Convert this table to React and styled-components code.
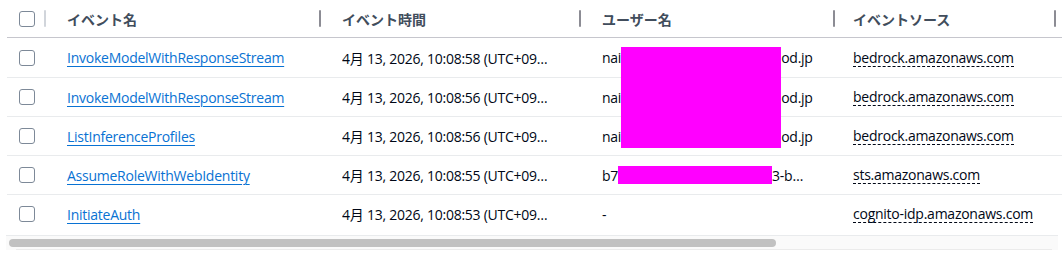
import React from "react";
import styled, { createGlobalStyle } from "styled-components";

const GlobalStyle = createGlobalStyle`
  body {
    margin: 0;
    background: #ffffff;
    font-family: "Open Sans", "Noto Sans CJK JP", sans-serif;
    -webkit-font-smoothing: antialiased;
  }
`;

const COLUMNS = "39px 275px 260px 254px 221px 240px";

const Page = styled.div`
  width: 1062px;
  height: 259px;
  overflow: hidden;
  padding-left: 7px;
  box-sizing: border-box;
`;

const Table = styled.div`
  display: flex;
  flex-direction: column;
  width: max-content;
`;

const HeaderRow = styled.div`
  display: grid;
  grid-template-columns: ${COLUMNS};
  height: 37px;
  border-bottom: 1px solid #c6c6cd;
`;

const Row = styled.div`
  display: grid;
  grid-template-columns: ${COLUMNS};
  height: 38px;
  border-bottom: 1px solid ${({ $last }) => ($last ? "transparent" : "#e9ebed")};
  &:nth-child(2) {
    height: 39px;
  }
`;

const HeaderCell = styled.div`
  display: flex;
  align-items: center;
  justify-content: space-between;
  padding-left: ${({ $pad }) => $pad}px;
  font-size: 14px;
  font-weight: 700;
  color: #414d5c;
  white-space: nowrap;
`;

const Resizer = styled.span`
  flex: none;
  width: 2px;
  height: 17px;
  border-radius: 1px;
  background: ${({ $light }) => ($light ? "#d1d5db" : "#8c8c94")};
`;

const Cell = styled.div`
  display: flex;
  align-items: center;
  min-width: 0;
  padding-left: ${({ $pad }) => $pad}px;
  padding-right: ${({ $right = 20 }) => $right}px;
  font-size: 14px;
  letter-spacing: -0.25px;
  color: #000716;
  white-space: nowrap;
`;

const Checkbox = styled.span`
  display: block;
  flex: none;
  width: 14px;
  height: 14px;
  border: 1px solid #7d8998;
  border-radius: 3px;
  background: #fff;
`;

const EventLink = styled.a`
  color: #0972d3;
  text-decoration: underline;
  text-decoration-thickness: 1px;
  text-underline-offset: 3px;
  cursor: pointer;
`;

const Truncate = styled.span`
  display: block;
  overflow: hidden;
  text-overflow: ellipsis;
  min-width: 0;
`;

const UserName = styled.span`
  display: flex;
  align-items: center;
`;

const Hidden = styled.span`
  position: relative;
  display: inline-block;
  flex: none;
  width: ${({ $w }) => $w}px;
  height: 18px;
  background: ${({ $fill }) => ($fill ? "#ff00ff" : "transparent")};
`;

const Mask = styled.span`
  position: absolute;
  z-index: 1;
  left: 0;
  top: -2px;
  width: 100%;
  height: ${({ $h }) => $h}px;
  background: #ff00ff;
`;

const Source = styled.span`
  line-height: 17px;
  border-bottom: 1px dashed #000716;
`;

const ScrollTrack = styled.div`
  margin-top: 1px;
  margin-left: -1px;
  width: 1052px;
  height: 14px;
  border-top: 1px solid #e9ebed;
  background: #fafafa;
  display: flex;
  flex-direction: column;
`;

const ScrollThumb = styled.div`
  margin-top: 3px;
  margin-left: 3px;
  width: 767px;
  height: 8px;
  border-radius: 4px;
  background: #c1c1c1;
`;

const TrackEdge = styled.div`
  margin-top: auto;
  margin-left: 10px;
  width: 1036px;
  height: 1px;
  background: #ebebeb;
`;

const headers = [
  { label: "イベント名", pad: 21 },
  { label: "イベント時間", pad: 21 },
  { label: "ユーザー名", pad: 21 },
  { label: "イベントソース", pad: 18 },
];

const rows = [
  {
    name: "InvokeModelWithResponseStream",
    time: "4月 13, 2026, 10:08:58 (UTC+09…",
    user: { head: "nai", gap: 160, tail: "od.jp", mask: 101 },
    source: "bedrock.amazonaws.com",
  },
  {
    name: "InvokeModelWithResponseStream",
    time: "4月 13, 2026, 10:08:56 (UTC+09…",
    user: { head: "nai", gap: 160, tail: "od.jp" },
    source: "bedrock.amazonaws.com",
  },
  {
    name: "ListInferenceProfiles",
    time: "4月 13, 2026, 10:08:56 (UTC+09…",
    user: { head: "nai", gap: 160, tail: "od.jp" },
    source: "bedrock.amazonaws.com",
  },
  {
    name: "AssumeRoleWithWebIdentity",
    time: "4月 13, 2026, 10:08:55 (UTC+09…",
    user: { head: "b7", gap: 154, tail: "3-b…", fill: true },
    source: "sts.amazonaws.com",
  },
  {
    name: "InitiateAuth",
    time: "4月 13, 2026, 10:08:53 (UTC+09…",
    user: null,
    source: "cognito-idp.amazonaws.com",
  },
];

function User({ user }) {
  if (!user) return <span>-</span>;
  return (
    <UserName>
      {user.head}
      <Hidden $w={user.gap} $fill={user.fill}>
        {user.mask && <Mask $h={user.mask} />}
      </Hidden>
      {user.tail}
    </UserName>
  );
}

export default function App() {
  return (
    <>
      <GlobalStyle />
      <Page>
        <Table>
          <HeaderRow>
            <HeaderCell $pad={12}>
              <Checkbox />
              <Resizer $light />
            </HeaderCell>
            {headers.map((h) => (
              <HeaderCell key={h.label} $pad={h.pad}>
                {h.label}
                <Resizer />
              </HeaderCell>
            ))}
            <HeaderCell $pad={21} />
          </HeaderRow>

          {rows.map((r, i) => (
            <Row key={i} $last={i === rows.length - 1}>
              <Cell $pad={12} $right={0}>
                <Checkbox />
              </Cell>
              <Cell $pad={21}>
                <EventLink>{r.name}</EventLink>
              </Cell>
              <Cell $pad={21} $right={18}>
                <Truncate>{r.time}</Truncate>
              </Cell>
              <Cell $pad={21}>
                <User user={r.user} />
              </Cell>
              <Cell $pad={18}>
                <Source>{r.source}</Source>
              </Cell>
              <Cell $pad={21} />
            </Row>
          ))}
        </Table>
        <ScrollTrack>
          <ScrollThumb />
          <TrackEdge />
        </ScrollTrack>
      </Page>
    </>
  );
}
